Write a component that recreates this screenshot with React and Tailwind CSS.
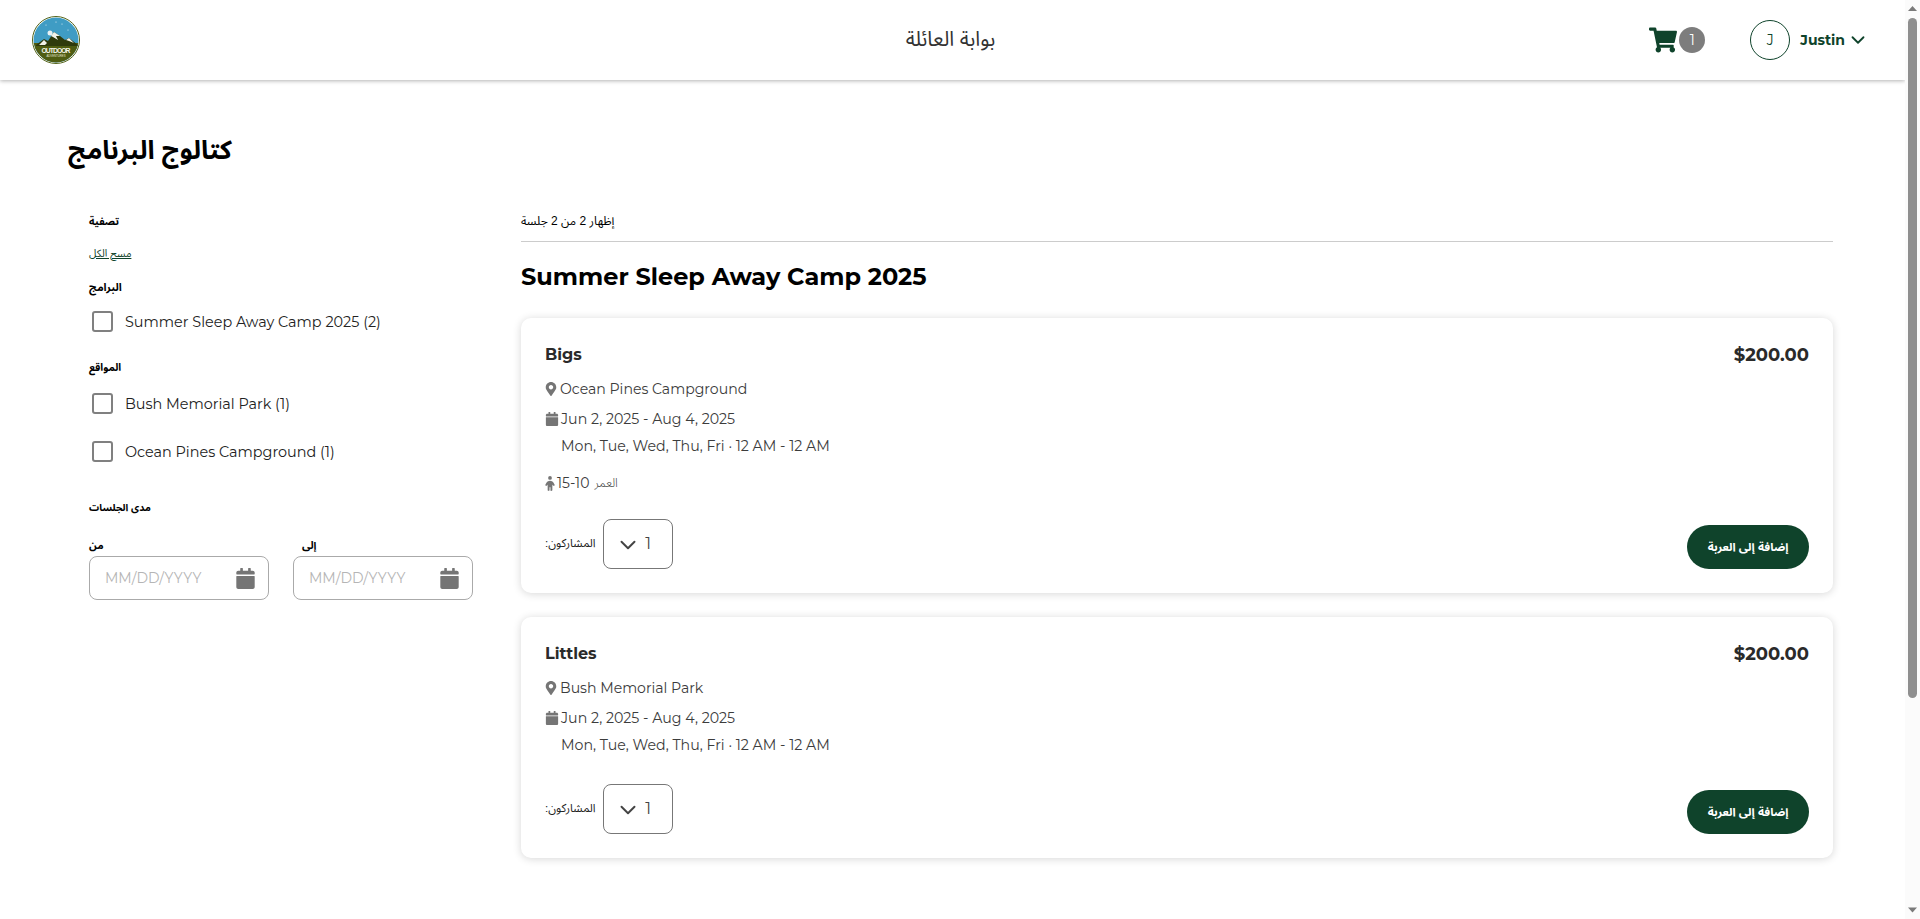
import { ChevronDown } from 'lucide-react';
import { FaCalendar, FaMapMarkerAlt, FaShoppingCart } from 'react-icons/fa';
import { FaChild } from 'react-icons/fa6';

const MONT = "font-['Montserrat','Inter','Liberation_Sans',sans-serif]";
const AR = "font-['Arial','Noto_Sans_Arabic','Noto_Naskh_Arabic','Liberation_Sans',sans-serif]";

// Badge logo, drawn small like the source image
function Logo() {
  return (
    <svg width="48" height="48" viewBox="0 0 48 48" className="block">
      <defs>
        <clipPath id="logo-clip">
          <circle cx="24" cy="24" r="22.4" />
        </clipPath>
      </defs>
      <circle cx="24" cy="24" r="23.5" fill="#fff" stroke="#55641a" strokeWidth="1" />
      <g clipPath="url(#logo-clip)">
        <rect width="48" height="48" fill="#3f9cc4" />
        <rect y="27" width="48" height="21" fill="#4f5c12" />
        <path d="M4 29 L12 23 L16 25 L22 16 L28 20 L33 24 L37 22 L46 29 L46 30 L4 30 Z" fill="#2f3a0c" />
        <path d="M7 29 L12 24 L15 27 L13 29 Z M19 20 L22 16 L28 20 L24 20 L26 24 L21 21 Z M34 24 L37 22 L42 27 L37 25 Z" fill="#f2f2ea" />
        <circle cx="18" cy="17" r="2.5" fill="#e8f1f4" />
        <circle cx="14" cy="9" r="0.5" fill="#fff" />
        <circle cx="30" cy="8" r="0.5" fill="#fff" />
        <circle cx="36" cy="14" r="0.5" fill="#fff" />
        <circle cx="24" cy="6" r="0.5" fill="#fff" />
      </g>
      <text x="24" y="36.6" textAnchor="middle" fontSize="6.8" fontWeight="700" fill="#f4f4ea" textLength="29" fontFamily="Liberation Sans, sans-serif">OUTDOOR</text>
      <text x="24" y="40.8" textAnchor="middle" fontSize="2.8" fill="#e4e6d2" fontFamily="Liberation Sans, sans-serif">ADVENTURES</text>
    </svg>
  );
}

function CheckRow({ label, className = '' }) {
  return (
    <label className={`flex items-center h-6 pl-[3px] ${className}`}>
      <span className="w-[21px] h-[21px] rounded-[3px] border-2 border-[#808080] mr-[12px] shrink-0" />
      <span className={`${MONT} text-[14.4px] text-[#222] mt-[3px]`}>{label}</span>
    </label>
  );
}

function DateField({ label, indent }) {
  return (
    <div className="w-[180px]">
      <div className={`${AR} text-[10.5px] font-bold text-black leading-[14px] h-[15px] mb-[3px] ${indent ? 'pl-[9px]' : ''}`}>{label}</div>
      <div className="h-[44px] rounded-[8px] border border-[#aaa] flex items-center justify-between pl-[15px] pr-[12px]">
        <span className={`${MONT} text-[14px] text-[#b5b5b5] mt-[1px]`}>MM/DD/YYYY</span>
        <FaCalendar className="text-[#757575] text-[21px]" />
      </div>
    </div>
  );
}

function SessionCard({ name, location, age }) {
  return (
    <div className={`bg-white rounded-[10px] shadow-[0_1px_8px_rgba(0,0,0,0.16)] px-6 ${age ? 'h-[275px]' : 'h-[241px]'} flex flex-col ${MONT} text-[#2a2a2a]`}>
      <div className="flex justify-between items-center pt-[27px]">
        <div className="font-bold text-[16px] leading-5">{name}</div>
        <div className="font-bold text-[18px] leading-5">$200.00</div>
      </div>
      <div className="flex items-center gap-[3px] text-[14.1px] text-[#3c3c3c] mt-[14px] leading-5">
        <FaMapMarkerAlt className="text-[#757575] text-[14px] w-[12px]" />
        {location}
      </div>
      <div className="flex items-center gap-[2px] text-[14.2px] text-[#3c3c3c] mt-[10px] leading-5">
        <FaCalendar className="text-[#757575] text-[14px]" />
        Jun 2, 2025 - Aug 4, 2025
      </div>
      <div className="text-[14.2px] text-[#3c3c3c] mt-[7px] leading-5 pl-[16px]">Mon, Tue, Wed, Thu, Fri · 12 AM - 12 AM</div>
      {age && (
        <div className="flex items-center gap-[2px] text-[14px] text-[#3c3c3c] mt-[17px] leading-5" dir="ltr">
          <FaChild className="text-[#757575] w-[10px] h-[15px]" />
          <span>15-10</span>
          <span className={`${AR} text-[12px] ml-[3px] font-light`}>العمر</span>
        </div>
      )}
      <div className="mt-auto pb-[24px] flex items-end justify-between">
        <div className="flex items-center gap-[7px]">
          <span className={`${AR} text-[11.5px] text-[#222]`}>:المشاركون</span>
          <div className="w-[70px] h-[50px] rounded-[8px] border border-[#777] flex items-center justify-center gap-[4px] pr-[9px]">
            <ChevronDown size={26} strokeWidth={1.8} className="text-[#444] mt-[2px]" />
            <span className="text-[16px] text-[#444]">1</span>
          </div>
        </div>
        <button className={`${AR} w-[122px] h-[44px] rounded-full bg-[#0f432b] text-white text-[11.6px] font-bold`}>إضافة إلى العربة</button>
      </div>
    </div>
  );
}

export default function App() {
  return (
    <div className="h-[919px] flex overflow-hidden bg-white">
      <div className="flex-1 min-w-0">
        <header className="h-[80px] bg-white shadow-[0_1px_4px_rgba(0,0,0,0.3)] flex items-center pl-[32px] pr-[36px]">
          <div className="flex-1">
            <Logo />
          </div>
          <div className={`${AR} text-[20.5px] text-[#333] pb-[2px]`}>بوابة العائلة</div>
          <div className="flex-1 flex items-center justify-end">
            <FaShoppingCart className="text-[#0f432b] text-[28px]" />
            <span className={`${MONT} w-[26px] h-[26px] rounded-full bg-[#7d7d7d] text-white text-[14px] flex items-center justify-center ml-[2px]`}>1</span>
            <span className={`${MONT} w-[40px] h-[40px] rounded-full border border-[#0f432b] text-[#0f432b] text-[14px] flex items-center justify-center ml-[45px]`}>J</span>
            <span className={`${MONT} font-bold text-[#0f432b] text-[14px] ml-[10px]`}>Justin</span>
            <ChevronDown size={22} strokeWidth={2} className="text-[#0f432b] ml-[2px]" />
          </div>
        </header>

        <main className="pl-[68px] pr-[72px] pt-[53px]">
          <h1 className={`${AR} text-[26px] font-bold text-black leading-[34px]`}>كتالوج البرنامج</h1>

          <div className="flex mt-[43px]">
            <aside className="w-[453px] shrink-0 pl-[21px]">
              <div className={`${AR} text-[10.5px] font-bold text-black leading-[14px] pt-[4px]`}>تصفية</div>
              <a className={`${AR} block w-fit text-[10.5px] text-[#0f432b] underline mt-[18px] leading-[14px]`}>مسح الكل</a>
              <div className={`${AR} text-[11px] font-bold text-black mt-[20px] leading-[14px]`}>البرامج</div>
              <CheckRow label="Summer Sleep Away Camp 2025 (2)" className="mt-[15px]" />
              <div className={`${AR} text-[10.5px] font-bold text-black mt-[27px] leading-[14px]`}>المواقع</div>
              <CheckRow label="Bush Memorial Park (1)" className="mt-[17px]" />
              <CheckRow label="Ocean Pines Campground (1)" className="mt-[24px]" />
              <div className={`${AR} text-[10px] font-bold text-black mt-[38px] leading-[14px]`}>مدى الجلسات</div>
              <div className="flex gap-[24px] mt-[23px]">
                <DateField label="من" />
                <DateField label="إلى" indent />
              </div>
            </aside>

            <section className="flex-1 min-w-0">
              <div className={`${AR} text-[12px] text-black border-b border-[#ccc] pb-[11px] pt-[2px] leading-[18px]`}>إظهار 2 من 2 جلسة</div>
              <h2 className={`${MONT} font-bold text-[24px] text-black mt-[19px] leading-[32px]`}>Summer Sleep Away Camp 2025</h2>
              <div className="flex flex-col gap-[24px] mt-[25px]">
                <SessionCard name="Bigs" location="Ocean Pines Campground" age />
                <SessionCard name="Littles" location="Bush Memorial Park" />
              </div>
            </section>
          </div>
        </main>
      </div>

      {/* drawn scrollbar: the page scrolls in the source */}
      <div className="w-[15px] shrink-0 bg-[#fbfbfb] flex flex-col items-center">
        <svg width="15" height="18" viewBox="0 0 15 18" className="shrink-0">
          <path d="M3 11 L7.5 6 L12 11 Z" fill="#7a7a7a" />
        </svg>
        <div className="w-[9px] h-[680px] rounded-full bg-[#8f8f8f]" />
        <svg width="15" height="18" viewBox="0 0 15 18" className="shrink-0 mt-auto">
          <path d="M3 6.5 L7.5 11.5 L12 6.5 Z" fill="#7a7a7a" />
        </svg>
      </div>
    </div>
  );
}
